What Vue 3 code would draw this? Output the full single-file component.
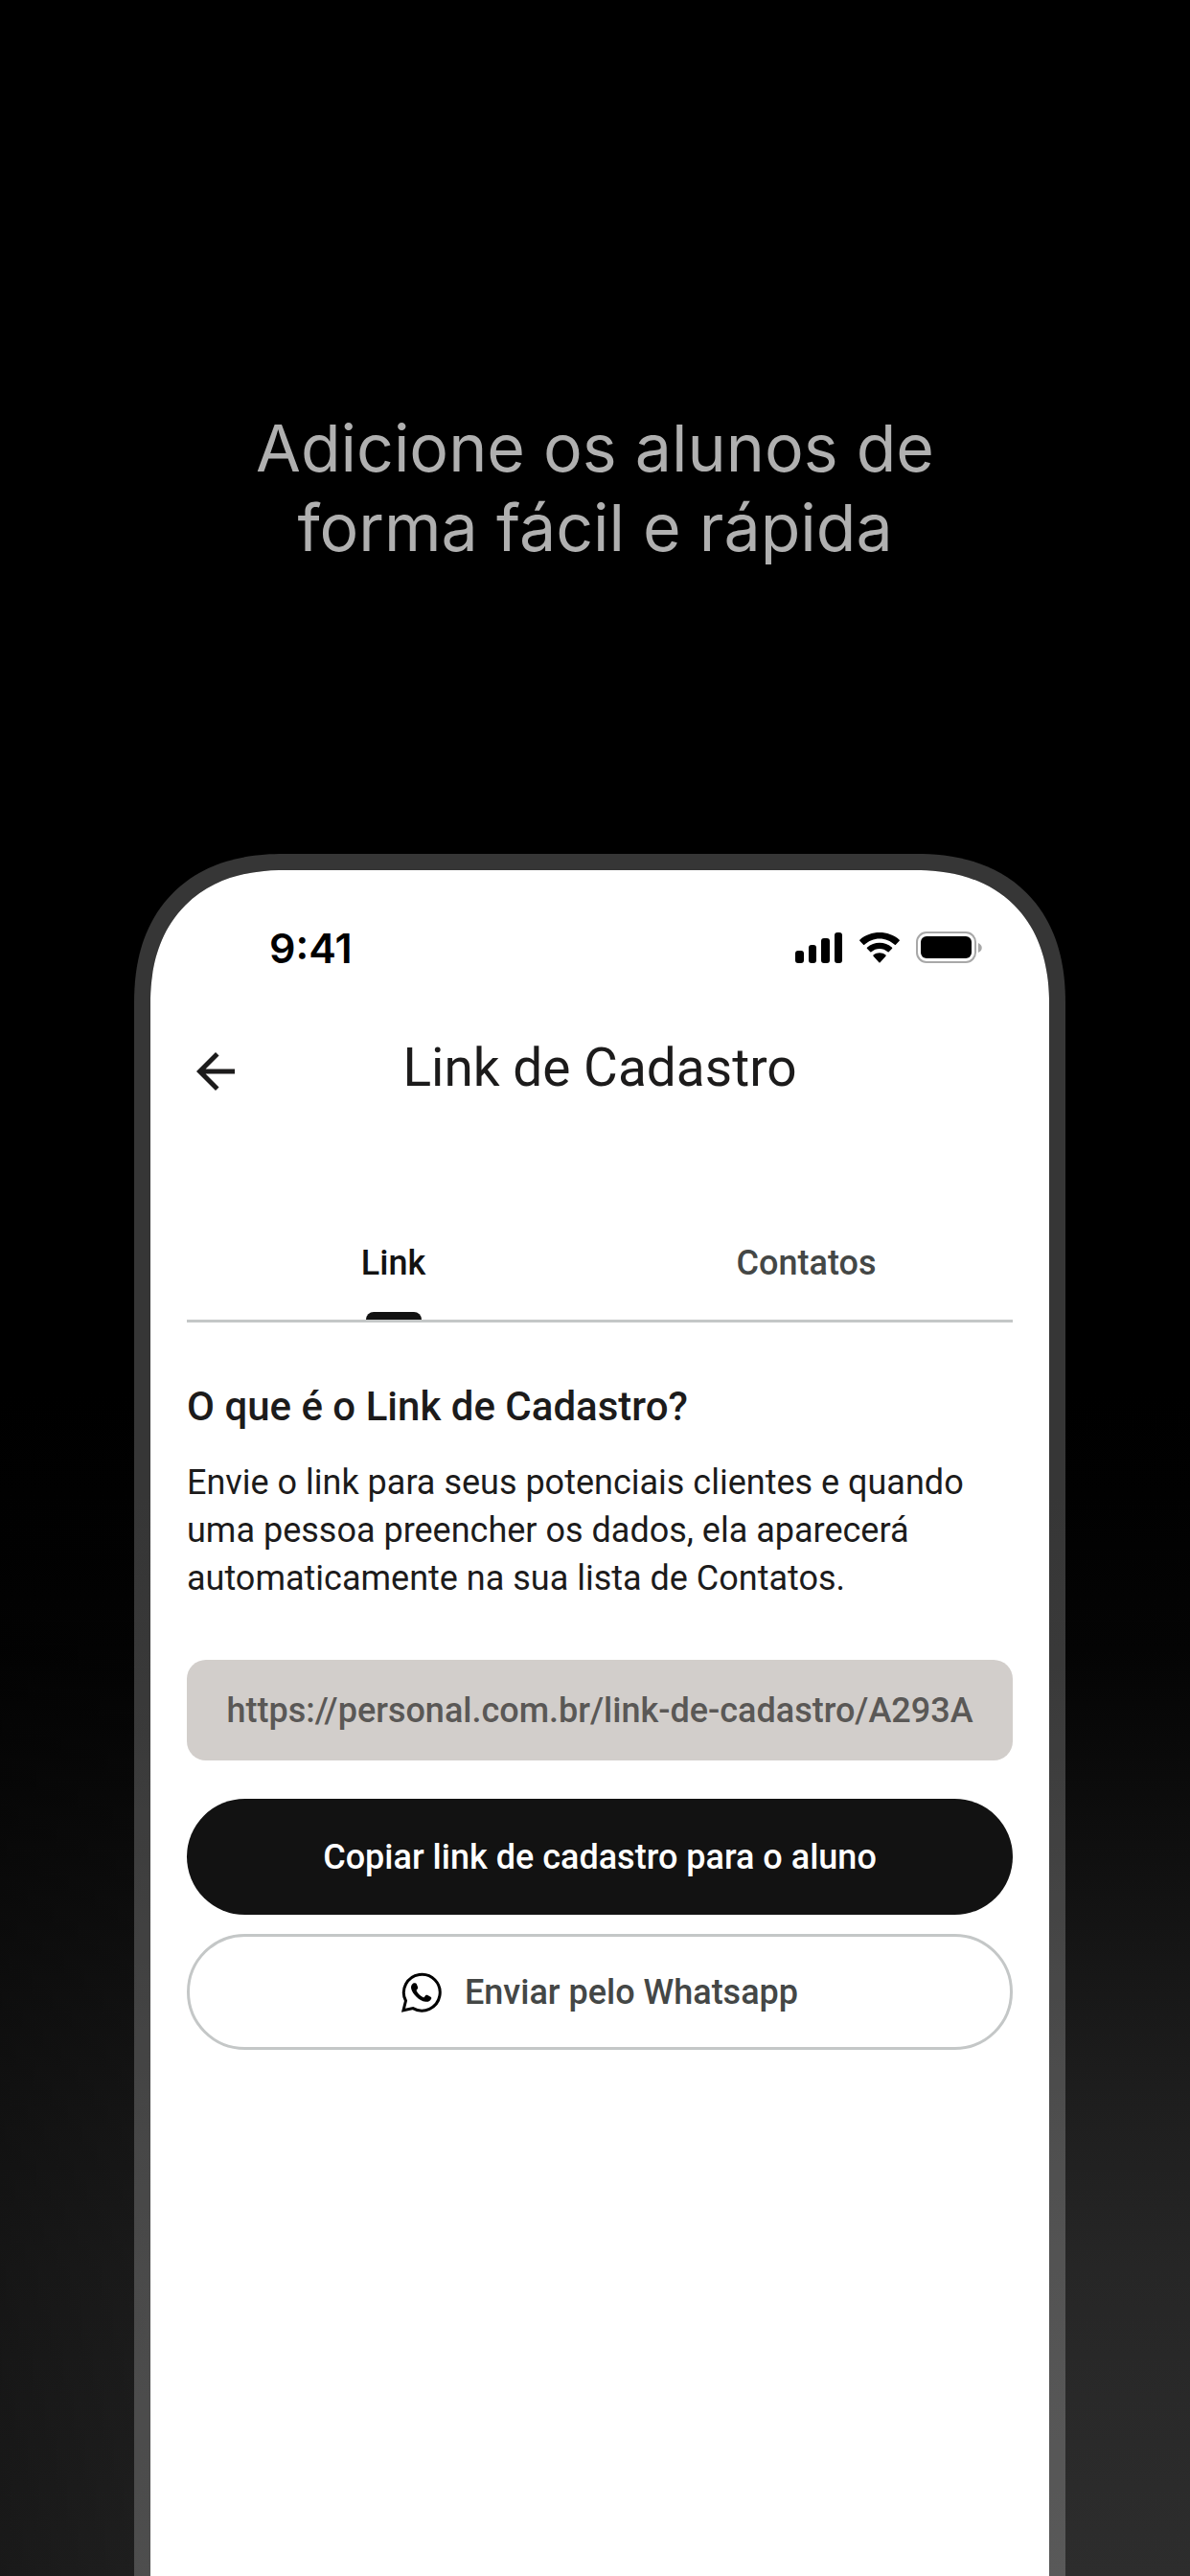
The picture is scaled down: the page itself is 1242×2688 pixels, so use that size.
<script setup>
import { ref } from 'vue'

const tabs = ['Link', 'Contatos']
const active = ref('Link')
const link = 'https://personal.com.br/link-de-cadastro/A293A'
</script>

<template>
  <main class="page">
    <h1 class="headline">Adicione os alunos de<br />forma fácil e rápida</h1>

    <section class="phone">
      <div class="status">
        <span class="time">9:41</span>
        <div class="indicators">
          <svg width="50" height="32" viewBox="0 0 50 32" aria-hidden="true">
            <rect x="0" y="19" width="9" height="13" rx="3" />
            <rect x="14" y="13" width="8" height="19" rx="3" />
            <rect x="27" y="6" width="9" height="26" rx="3" />
            <rect x="41" y="0" width="8" height="32" rx="3" />
          </svg>
          <svg width="44" height="32" viewBox="0 0 44 32" aria-hidden="true">
            <path d="M22 6.4c5.9 0 11.500 2.300 15.800 6.300.3.300.8.300 1.100 0l3.800-3.900c.3-.3.3-.8 0-1.100C31.200-2.500 12.800-2.500 1.300 7.700c-.3.300-.3.800 0 1.100l3.800 3.900c.3.300.8.300 1.100 0C10.500 8.700 16.100 6.400 22 6.400z" />
            <path d="M22 17c3.200 0 6.200 1.200 8.600 3.300.3.300.8.300 1.100 0l3.400-3.500c.3-.3.300-.8 0-1.100-7.400-6.700-18.800-6.700-26.200 0-.3.300-.3.800 0 1.100l3.400 3.500c.3.300.8.300 1.100 0C15.800 18.200 18.800 17 22 17z" />
            <path d="M28.500 24.700c.3-.3.300-.8 0-1.100-3.800-3.200-9.200-3.200-13 0-.3.300-.3.800 0 1.100l5.900 6.500c.3.300.9.300 1.200 0z" />
          </svg>
          <svg width="69" height="34" viewBox="0 0 69 34" aria-hidden="true">
            <rect x="1" y="1" width="61" height="31" rx="10" fill="none" stroke="#a8a8a8" stroke-width="2" />
            <rect x="5" y="5" width="53" height="23" rx="6" />
            <path d="M65 12c5 2 5 8 0 10z" fill="#a8a8a8" />
          </svg>
        </div>
      </div>

      <header class="appbar">
        <button class="back" type="button" aria-label="Voltar">
          <svg width="60" height="60" viewBox="0 0 24 24" aria-hidden="true">
            <path d="M20 11H7.830l5.590-5.590L12 4l-8 8 8 8 1.410-1.410L7.830 13H20z" />
          </svg>
        </button>
        <h2 class="title">Link de Cadastro</h2>
      </header>

      <div class="tabs" role="tablist">
        <button
          v-for="tab in tabs"
          :key="tab"
          class="tab"
          :class="{ active: tab === active }"
          type="button"
          role="tab"
          :aria-selected="tab === active"
          @click="active = tab"
        >
          {{ tab }}
        </button>
      </div>

      <h3 class="question">O que é o Link de Cadastro?</h3>
      <p class="text">
        Envie o link para seus potenciais clientes e quando<br />
        uma pessoa preencher os dados, ela aparecerá<br />
        automaticamente na sua lista de Contatos.
      </p>

      <input class="url" type="text" :value="link" readonly aria-label="Link de cadastro" />

      <div class="actions">
        <button class="action primary" type="button">Copiar link de cadastro para o aluno</button>
        <button class="action outlined" type="button">
          <svg width="42" height="42" viewBox="0 0 42 42" aria-hidden="true">
            <path
              d="M4.500 29.800A18.900 18.900 0 1 1 12 37.600L2 39.800z"
              fill="none"
              stroke="#000"
              stroke-width="3"
            />
            <path d="M12 11.800C10.500 12.800 9.600 14.800 10.200 17.200C11.500 22.500 18 29.600 25.200 30.800C28 31.100 30.400 29.800 31.300 27.200C31.400 26.600 31 26 30.500 25.700L27 23.800C26.300 23.500 25.700 23.600 25.300 24.100L23.800 26C23.400 26.400 22.900 26.400 22.400 26.100C19.500 24.600 17.200 22.200 15.800 19.600C15.500 19.100 15.600 18.700 16 18.300L17 17C17.300 16.500 17.300 16 17.100 15.500L15.700 12C15.200 11.200 13 11 12 11.800Z" />
          </svg>
          Enviar pelo Whatsapp
        </button>
      </div>
    </section>
  </main>
</template>

<style>
body {
  background: #000;
}
</style>

<style scoped>
.page {
  box-sizing: border-box;
  display: flex;
  flex-direction: column;
  min-height: 100vh;
  padding: 426px 130px 0 140px;
  background:
    linear-gradient(90deg, rgba(0, 0, 0, 0.44), rgba(0, 0, 0, 0.32) 12%, transparent 85%),
    linear-gradient(
      #000 54%,
      #010101 58%,
      #040404 64%,
      #0e0e0e 71%,
      #161616 76%,
      #1d1d1d 81%,
      #262626 88%,
      #2d2d2d
    );
  font-family: Roboto, "Liberation Sans", sans-serif;
}

.headline {
  margin: 0 0 299px;
  /* centred on the page, whose side paddings differ */
  padding-right: 10px;
  color: #b0b0b0;
  font: 400 68px/83px Inter, sans-serif;
  text-align: center;
}

.phone {
  box-sizing: border-box;
  flex: 1;
  display: flex;
  flex-direction: column;
  padding: 0 38px 40px;
  border: 17px solid rgba(255, 255, 255, 0.21);
  border-bottom: 0;
  border-radius: 140px 140px 0 0;
  background: #fff padding-box;
}

@supports (corner-shape: superellipse(1.2)) {
  .phone {
    border-radius: 156px 156px 0 0;
    corner-shape: superellipse(1.2);
  }
}

.status {
  display: flex;
  align-items: center;
  justify-content: space-between;
  height: 60px;
  margin: 51px 32px 0 86px;
}

.time {
  font: 600 43px/60px Inter, sans-serif;
}

.indicators {
  display: flex;
  align-items: center;
  gap: 16px;
}

.appbar {
  display: grid;
  grid-template-columns: 60px 1fr 60px;
  align-items: end;
  margin-top: 61px;
}

.back {
  display: flex;
  padding: 0;
  border: 0;
  background: none;
  fill: #1c1b1b;
}

.title {
  margin: 0;
  color: #1c1b1b;
  font-size: 55px;
  font-weight: 400;
  line-height: 68px;
  text-align: center;
}

.tabs {
  display: flex;
  margin-top: 110px;
  border-bottom: 3px solid #c4c7c7;
}

.tab {
  position: relative;
  flex: 1;
  height: 119px;
  padding: 0;
  border: 0;
  background: none;
  color: #444746;
  font: 500 36px/50px Roboto, sans-serif;
}

.tab.active {
  color: #121212;
}

.tab.active::after {
  content: "";
  position: absolute;
  bottom: 0;
  left: 50%;
  width: 58px;
  height: 8px;
  margin-left: -29px;
  border-radius: 8px 8px 0 0;
  background: #121212;
}

.question {
  margin: 60px 0 0;
  color: #1c1b1b;
  font-size: 42px;
  font-weight: 500;
  line-height: 56px;
}

.text {
  margin: 26px 0 0;
  color: #1c1b1b;
  font-size: 36px;
  line-height: 50px;
}

.url {
  box-sizing: border-box;
  width: 100%;
  height: 105px;
  margin: 60px 0 40px;
  padding: 0 40px;
  border: 0;
  border-radius: 20px;
  background: #d2cecb;
  color: #5a5856;
  font: 500 36px/50px Roboto, sans-serif;
  text-align: center;
}

.actions {
  display: flex;
  flex-direction: column;
  gap: 20px;
}

.action {
  display: flex;
  align-items: center;
  justify-content: center;
  gap: 24px;
  height: 121px;
  border: 0;
  border-radius: 61px;
  font: 500 36px/50px Roboto, sans-serif;
}

.primary {
  background: #121212;
  color: #fff;
}

.outlined {
  border: 3px solid #c4c7c7;
  background: #fff;
  color: #444746;
}
</style>
